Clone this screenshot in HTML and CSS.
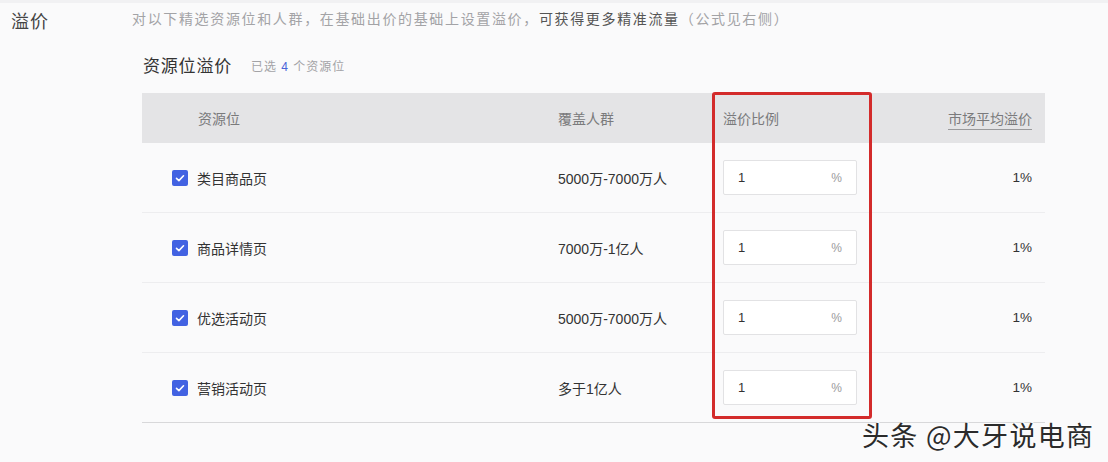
FILE: index.html
```html
<!DOCTYPE html>
<html lang="zh-CN">

<head>
    <meta charset="UTF-8" />
    <meta name="viewport" content="width=device-width, initial-scale=1" />
    <title>溢价</title>
    <link rel="stylesheet" href="styles.css">
</head>

<body>
    <div class="page">
        <div class="intro">
            <span class="intro-label">溢价</span>
            <p class="intro-text">对以下精选资源位和人群，在基础出价的基础上设置溢价，<span class="strong">可获得更多精准流量</span>（公式见右侧）</p>
        </div>

        <div class="section">
            <div class="section-head">
                <h3>资源位溢价</h3>
                <span class="picked">已选 <b>4</b> 个资源位</span>
            </div>

            <div class="table">
                <div class="row head">
                    <div class="cell first">资源位</div>
                    <div class="cell">覆盖人群</div>
                    <div class="cell">溢价比例</div>
                    <div class="cell last"><span class="tip">市场平均溢价</span></div>
                </div>

                <div class="row">
                    <div class="cell check"><span class="box"><svg viewBox="0 0 16 16"><path d="M4.5 8.3l2.4 2.3 4.6-4.8" /></svg></span>类目商品页</div>
                    <div class="cell">5000万-7000万人</div>
                    <div class="cell"><div class="input"><span>1</span><span class="unit">%</span></div></div>
                    <div class="cell last">1%</div>
                </div>

                <div class="row">
                    <div class="cell check"><span class="box"><svg viewBox="0 0 16 16"><path d="M4.5 8.3l2.4 2.3 4.6-4.8" /></svg></span>商品详情页</div>
                    <div class="cell">7000万-1亿人</div>
                    <div class="cell"><div class="input"><span>1</span><span class="unit">%</span></div></div>
                    <div class="cell last">1%</div>
                </div>

                <div class="row">
                    <div class="cell check"><span class="box"><svg viewBox="0 0 16 16"><path d="M4.5 8.3l2.4 2.3 4.6-4.8" /></svg></span>优选活动页</div>
                    <div class="cell">5000万-7000万人</div>
                    <div class="cell"><div class="input"><span>1</span><span class="unit">%</span></div></div>
                    <div class="cell last">1%</div>
                </div>

                <div class="row end">
                    <div class="cell check"><span class="box"><svg viewBox="0 0 16 16"><path d="M4.5 8.3l2.4 2.3 4.6-4.8" /></svg></span>营销活动页</div>
                    <div class="cell">多于1亿人</div>
                    <div class="cell"><div class="input"><span>1</span><span class="unit">%</span></div></div>
                    <div class="cell last">1%</div>
                </div>

                <div class="highlight"></div>
            </div>
        </div>

        <div class="watermark">头条 @大牙说电商</div>
    </div>
</body>

</html>
```

FILE: styles.css
```css
body {
    margin: 0;
    background: #fafafb;
    font-family: "Liberation Sans", "Noto Sans CJK SC", sans-serif;
    color: #333;
}

.page {
    position: relative;
    height: 462px;
    border-top: 3px solid #f1f1f3;
    box-sizing: border-box;
}

.intro {
    display: flex;
    align-items: center;
    height: 30px;
}

.intro-label {
    width: 121px;
    padding-left: 11px;
    font-size: 18px;
    letter-spacing: 1px;
    color: #444;
    margin-top: 3px;
}

.intro-text {
    margin: 0;
    font-size: 14px;
    letter-spacing: 1.65px;
    color: #a3a3a6;
}

.intro-text .strong {
    color: #555;
}

.section {
    margin-left: 142px;
    width: 903px;
}

.section-head {
    display: flex;
    align-items: center;
    gap: 19px;
    margin-top: 18px;
    height: 26px;
    padding-left: 1px;
}

.section-head h3 {
    margin: 0;
    font-size: 17px;
    font-weight: normal;
    letter-spacing: 0.8px;
    color: #333;
}

.picked {
    font-size: 12px;
    color: #a3a3a6;
    letter-spacing: 1px;
    margin-top: 2px;
}

.picked b {
    color: #4a63d8;
    font-weight: normal;
}

.table {
    position: relative;
    margin-top: 16px;
}

.row {
    display: grid;
    grid-template-columns: 416px 165px 160px 1fr;
    height: 70px;
    align-items: center;
    border-bottom: 1px solid #ededef;
    font-size: 14px;
    color: #333;
    box-sizing: border-box;
}

.row.head {
    height: 50px;
    background: #e4e4e6;
    border-bottom: none;
    color: #7a7a7c;
}

.row.end {
    border-bottom-color: #d8d8da;
}

.cell.first {
    padding-left: 56px;
}

.cell.last {
    text-align: right;
    padding-right: 13px;
    font-size: 13.5px;
}

.tip {
    font-size: 14px;
    color: #7a7a7c;
    border-bottom: 1px solid #9a9a9c;
    padding-bottom: 2px;
}

.check {
    display: flex;
    align-items: center;
    gap: 9px;
    padding-left: 30px;
}

.box {
    width: 16px;
    height: 16px;
    border-radius: 2px;
    background: #4262e2;
    display: inline-flex;
}

.box svg {
    width: 16px;
    height: 16px;
    fill: none;
    stroke: #fff;
    stroke-width: 1.6;
    stroke-linecap: round;
    stroke-linejoin: round;
}

.input {
    width: 134px;
    height: 35px;
    box-sizing: border-box;
    display: flex;
    align-items: center;
    justify-content: space-between;
    padding: 0 14px 0 14px;
    background: #fff;
    border: 1px solid #e2e2e4;
    border-radius: 2px;
    font-size: 13px;
    color: #333;
}

.input .unit {
    color: #9a9a9c;
    font-size: 12px;
}

.highlight {
    position: absolute;
    left: 570px;
    top: -1px;
    width: 160px;
    height: 327px;
    border: 3px solid #d32b2b;
    border-radius: 3px;
    box-sizing: border-box;
    pointer-events: none;
}

.watermark {
    position: absolute;
    left: 862px;
    top: 412px;
    font-family: "Noto Sans CJK SC", sans-serif;
    font-size: 27px;
    letter-spacing: 1.3px;
    color: #2b2b2b;
    text-shadow: 1px -1px 0 rgba(255, 255, 255, 0.9);
}
```
